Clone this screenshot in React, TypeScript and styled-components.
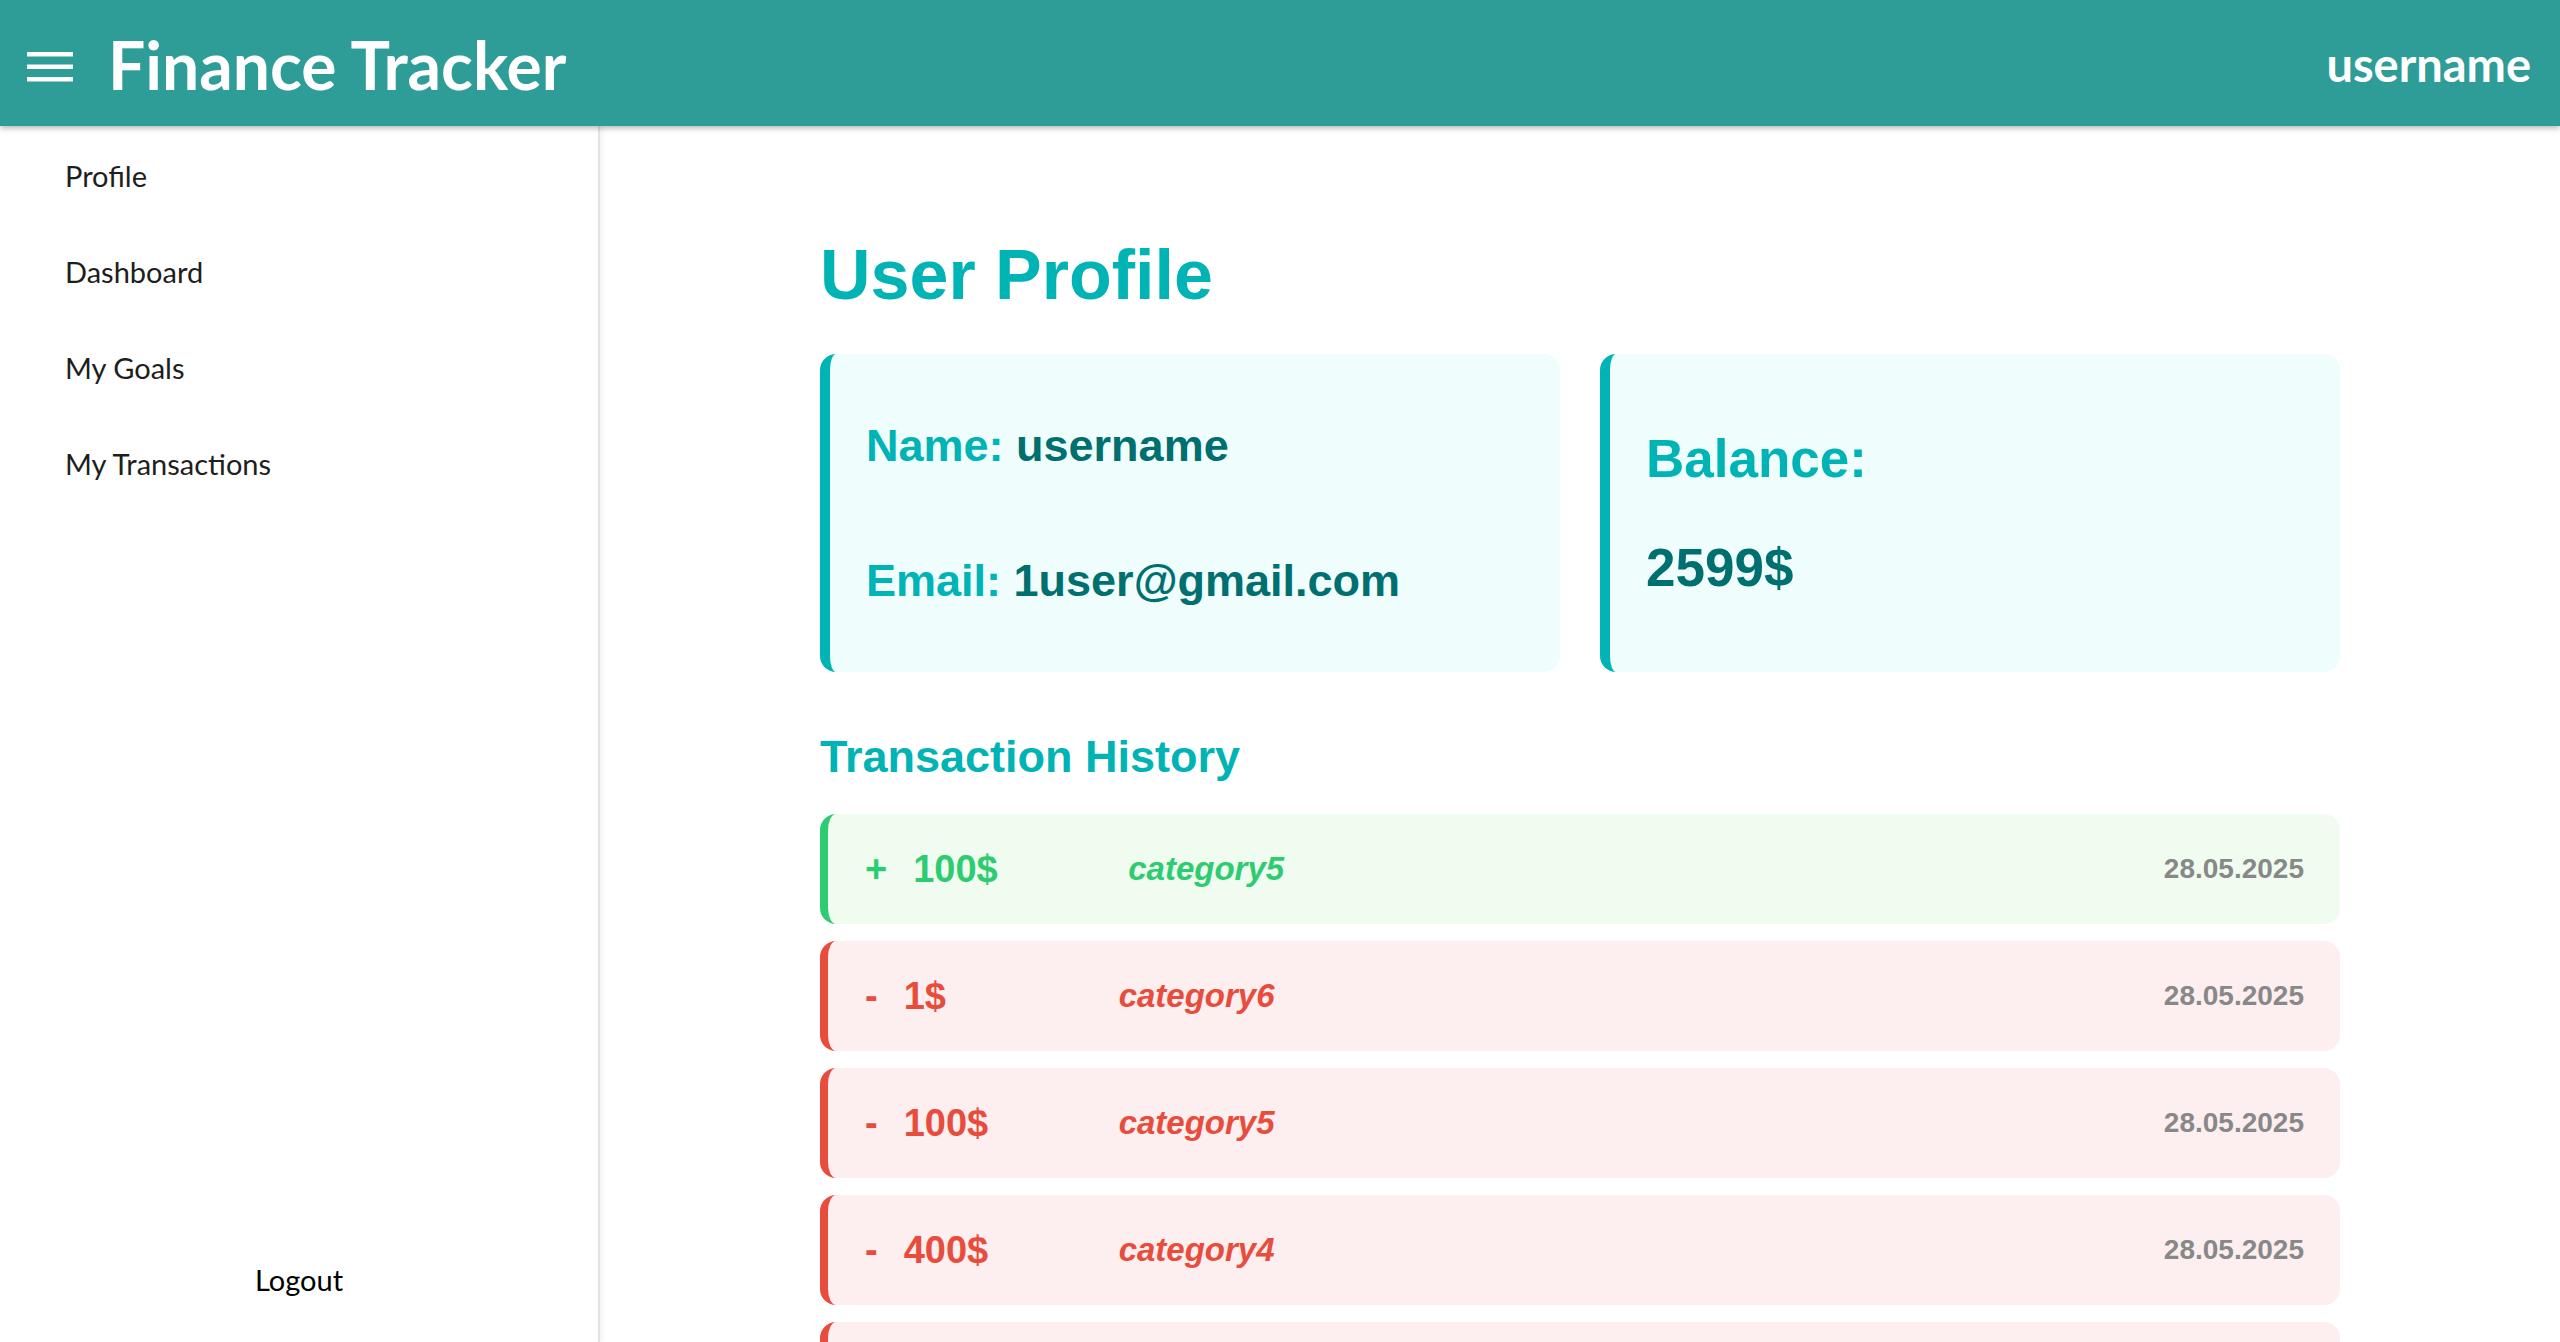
import styled, { createGlobalStyle } from "styled-components";

const GlobalStyle = createGlobalStyle`
  html, body {
    margin: 0;
    padding: 0;
    height: 100%;
    overflow: hidden;
    background: #ffffff;
  }

  * {
    box-sizing: border-box;
  }
`;

const colors = {
  header: "#2e9d97",
  accent: "#00b3b5",
  accentDark: "#006f6f",
  cardBg: "#effdfd",
  income: "#2ecc71",
  incomeBg: "#f0fcf0",
  expense: "#e74c3c",
  expenseBg: "#fdeeef",
  muted: "#888888",
};

const Page = styled.div`
  height: 100vh;
  display: flex;
  flex-direction: column;
`;

const Header = styled.header`
  position: relative;
  z-index: 2;
  height: 126px;
  flex-shrink: 0;
  display: flex;
  align-items: center;
  padding: 0 29px 0 27px;
  background-color: ${colors.header};
  box-shadow: 0 2px 6px rgba(0, 0, 0, 0.3);
  font-family: Lato, "Open Sans", sans-serif;
  color: #ffffff;
`;

const MenuButton = styled.svg`
  width: 46px;
  height: 30px;
  margin-top: 7px;
  flex-shrink: 0;
`;

const AppTitle = styled.h1`
  margin: 3px 0 0 35px;
  font-size: 66px;
  font-weight: 700;
  line-height: 1.2;
`;

const HeaderUser = styled.div`
  margin: 3px 0 0 auto;
  font-size: 47px;
  font-weight: 700;
  line-height: 1.2;
`;

const Body = styled.div`
  flex: 1;
  min-height: 0;
  display: flex;
`;

const Sidebar = styled.aside`
  width: 600px;
  flex-shrink: 0;
  display: flex;
  flex-direction: column;
  padding-top: 2px;
  border-right: 2px solid #e4e4e4;
  box-shadow: 2px 0 5px rgba(0, 0, 0, 0.06);
  font-family: Lato, "Open Sans", sans-serif;
`;

const NavItem = styled.a`
  display: block;
  padding: 30px 0 30px 65px;
  font-size: 29px;
  line-height: 36px;
  color: #1e1e1e;
  text-decoration: none;
  cursor: pointer;
`;

const LogoutButton = styled.button`
  margin-top: auto;
  margin-bottom: 14px;
  padding: 30px 0;
  border: none;
  background: none;
  font-family: inherit;
  font-size: 29px;
  line-height: 36px;
  color: #000000;
  text-align: center;
  cursor: pointer;
`;

const Main = styled.main`
  flex: 1;
  min-width: 0;
  overflow-y: auto;
  scrollbar-width: none;
  font-family: "Liberation Sans", Arial, sans-serif;
`;

const Content = styled.div`
  max-width: 1520px;
  margin: 0 auto;
  padding: 109px 0 60px;
`;

const PageTitle = styled.h2`
  margin: 0 0 39px;
  font-size: 70px;
  font-weight: 700;
  line-height: 80px;
  color: ${colors.accent};
`;

const CardGrid = styled.div`
  display: grid;
  grid-template-columns: 1fr 1fr;
  gap: 40px;
`;

const InfoCard = styled.section<{ $gap: number; $padding: number }>`
  display: flex;
  flex-direction: column;
  justify-content: center;
  gap: ${(p) => p.$gap}px;
  padding: ${(p) => p.$padding}px 36px;
  background-color: ${colors.cardBg};
  border-left: 10px solid ${colors.accent};
  border-radius: 16px;
`;

const InfoLine = styled.p`
  margin: 0;
  font-size: 45px;
  font-weight: 700;
  line-height: 51px;
  color: ${colors.accentDark};
`;

const Label = styled.span`
  color: ${colors.accent};
`;

const BalanceLabel = styled.h3`
  margin: 0;
  font-size: 53px;
  font-weight: 700;
  line-height: 61px;
  color: ${colors.accent};
`;

const BalanceValue = styled.p`
  margin: 0;
  font-size: 53px;
  font-weight: 700;
  line-height: 61px;
  color: ${colors.accentDark};
`;

const SectionTitle = styled.h3`
  margin: 59px 0 32px;
  font-size: 45px;
  font-weight: 700;
  line-height: 51px;
  color: ${colors.accent};
`;

const TransactionList = styled.ul`
  list-style: none;
  margin: 0;
  padding: 0;
  display: flex;
  flex-direction: column;
  gap: 17px;
`;

const TransactionRow = styled.li<{ $income: boolean }>`
  height: 110px;
  display: flex;
  align-items: center;
  padding: 0 36px 0 37px;
  border-radius: 16px;
  border-left: 8px solid ${(p) => (p.$income ? colors.income : colors.expense)};
  background-color: ${(p) => (p.$income ? colors.incomeBg : colors.expenseBg)};
  color: ${(p) => (p.$income ? colors.income : colors.expense)};
  font-weight: 700;
`;

const Sign = styled.span`
  margin-right: 26px;
  font-size: 38px;
`;

const Amount = styled.span`
  min-width: 215px;
  font-size: 38px;
`;

const Category = styled.span`
  font-size: 33px;
  font-style: italic;
`;

const TxDate = styled.span`
  margin-left: auto;
  font-size: 28px;
  color: ${colors.muted};
`;

type Transaction = {
  income: boolean;
  amount: number;
  category: string;
  date: string;
};

const transactions: Transaction[] = [
  { income: true, amount: 100, category: "category5", date: "28.05.2025" },
  { income: false, amount: 1, category: "category6", date: "28.05.2025" },
  { income: false, amount: 100, category: "category5", date: "28.05.2025" },
  { income: false, amount: 400, category: "category4", date: "28.05.2025" },
  { income: false, amount: 50, category: "category3", date: "28.05.2025" },
];

const navItems = ["Profile", "Dashboard", "My Goals", "My Transactions"];

const MenuIcon = () => (
  <MenuButton viewBox="0 0 46 30" fill="#ffffff">
    <rect x="0" y="0" width="46" height="4.5" />
    <rect x="0" y="12.5" width="46" height="4.5" />
    <rect x="0" y="25" width="46" height="4.5" />
  </MenuButton>
);

const App = () => {
  return (
    <>
      <GlobalStyle />
      <Page>
        <Header>
          <MenuIcon />
          <AppTitle>Finance Tracker</AppTitle>
          <HeaderUser>username</HeaderUser>
        </Header>

        <Body>
          <Sidebar>
            {navItems.map((item) => (
              <NavItem key={item}>{item}</NavItem>
            ))}
            <LogoutButton>Logout</LogoutButton>
          </Sidebar>

          <Main>
            <Content>
              <PageTitle>User Profile</PageTitle>

              <CardGrid>
                <InfoCard $gap={84} $padding={66}>
                  <InfoLine>
                    <Label>Name:</Label> username
                  </InfoLine>
                  <InfoLine>
                    <Label>Email:</Label> 1user@gmail.com
                  </InfoLine>
                </InfoCard>

                <InfoCard $gap={48} $padding={40}>
                  <BalanceLabel>Balance:</BalanceLabel>
                  <BalanceValue>2599$</BalanceValue>
                </InfoCard>
              </CardGrid>

              <SectionTitle>Transaction History</SectionTitle>

              <TransactionList>
                {transactions.map((tx, i) => (
                  <TransactionRow key={i} $income={tx.income}>
                    <Sign>{tx.income ? "+" : "-"}</Sign>
                    <Amount>{tx.amount}$</Amount>
                    <Category>{tx.category}</Category>
                    <TxDate>{tx.date}</TxDate>
                  </TransactionRow>
                ))}
              </TransactionList>
            </Content>
          </Main>
        </Body>
      </Page>
    </>
  );
};

export default App;
